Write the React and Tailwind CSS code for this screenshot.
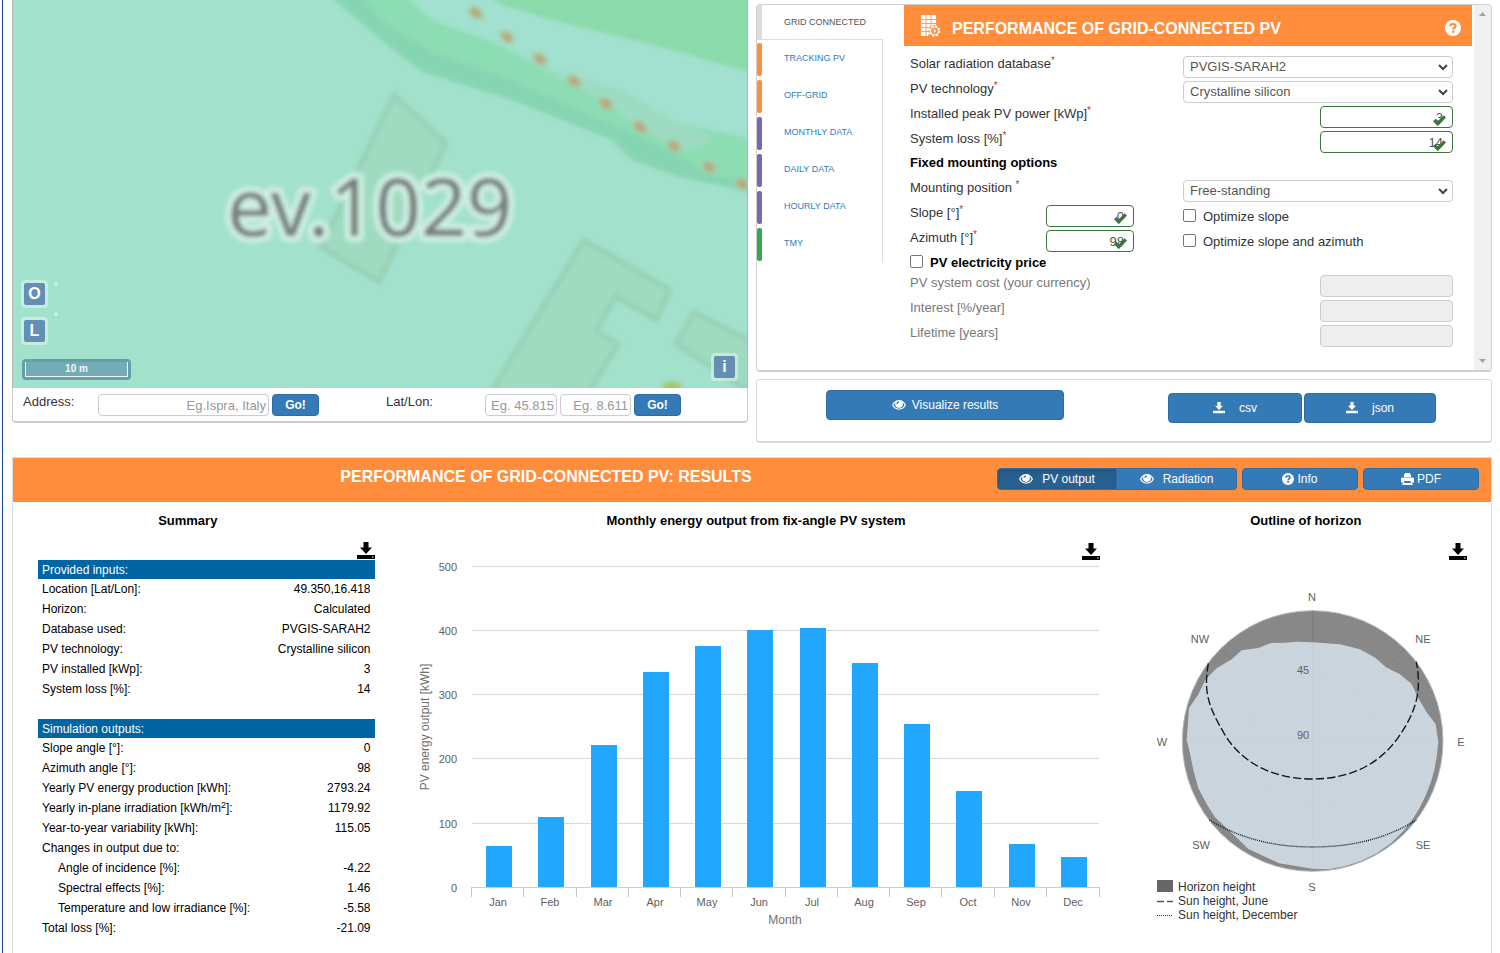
import { useState } from "react";

const tabs = [
  { name: "TRACKING PV", color: "bg-[#ff8d3c]" },
  { name: "OFF-GRID", color: "bg-[#ff8d3c]" },
  { name: "MONTHLY DATA", color: "bg-[#7a68ae]" },
  { name: "DAILY DATA", color: "bg-[#7a68ae]" },
  { name: "HOURLY DATA", color: "bg-[#7a68ae]" },
  { name: "TMY", color: "bg-[#34a853]" },
];

const inputs = [
  ["Location [Lat/Lon]:", "49.350,16.418"],
  ["Horizon:", "Calculated"],
  ["Database used:", "PVGIS-SARAH2"],
  ["PV technology:", "Crystalline silicon"],
  ["PV installed [kWp]:", "3"],
  ["System loss [%]:", "14"],
];

const outputs = [
  ["Slope angle [°]:", "0"],
  ["Azimuth angle [°]:", "98"],
  ["Yearly PV energy production [kWh]:", "2793.24"],
  [
    <>
      Yearly in-plane irradiation [kWh/m<sup className="text-[9px]">2</sup>]:
    </>,
    "1179.92",
  ],
  ["Year-to-year variability [kWh]:", "115.05"],
  ["Changes in output due to:", ""],
  ["Angle of incidence [%]:", "-4.22", true],
  ["Spectral effects [%]:", "1.46", true],
  ["Temperature and low irradiance [%]:", "-5.58", true],
  ["Total loss [%]:", "-21.09"],
];

const months = [
  { name: "Jan", value: 64 },
  { name: "Feb", value: 109 },
  { name: "Mar", value: 221 },
  { name: "Apr", value: 335 },
  { name: "May", value: 375 },
  { name: "Jun", value: 399 },
  { name: "Jul", value: 403 },
  { name: "Aug", value: 349 },
  { name: "Sep", value: 254 },
  { name: "Oct", value: 150 },
  { name: "Nov", value: 67 },
  { name: "Dec", value: 47 },
];

const EyeIcon = () => (
  <svg width="14" height="10" viewBox="0 0 14 10" aria-hidden="true">
    <path
      fill="currentColor"
      fillRule="evenodd"
      d="M7 0C3.8 0 1.3 2 0 5c1.3 2.800 3.800 4.700 7 4.700S12.700 7.800 14 5C12.700 2 10.200 0 7 0ZM1.400 5.100C2 3.800 2.800 2.800 3.700 2.200 3.300 2.900 3.100 3.500 3.100 4.300c0 2.200 1.700 3.600 3.900 3.600s3.900-1.400 3.900-3.600c0-.8-.2-1.400-.6-2.100.9.6 1.700 1.600 2.300 2.900C11.500 7.300 9.500 8.700 7 8.700S2.500 7.300 1.400 5.100Z"
    />
    <path d="M4.900 4C5 2.800 5.800 2 7 1.900" fill="none" stroke="#2d6ca3" strokeWidth="1.1" />
  </svg>
);

const SaveIcon = ({ size = 18 }) => (
  <svg width={size} height={size} viewBox="0 0 18 18" fill="currentColor" aria-hidden="true">
    <path d="M6.500 0h5v5.500H15L9 12 3 5.500h3.500Z" />
    <path fillRule="evenodd" d="M0 13h18v4H0Zm15 1.500v1h1.500v-1Z" />
  </svg>
);

const QuestionIcon = ({ size, mark = "#337ab7" }) => (
  <svg width={size} height={size} viewBox="0 0 16 16" aria-hidden="true">
    <circle cx="8" cy="8" r="8" fill="#fff" />
    <path
      d="M5.300 6.200C5.300 4.500 6.500 4 8 4s2.600.8 2.600 2.200c0 1.700-2.400 1.400-2.400 3.300"
      fill="none"
      stroke={mark}
      strokeWidth="2.200"
    />
    <path d="M7 10.600h2.400v2.200H7Z" fill={mark} />
  </svg>
);

const PrintIcon = () => (
  <svg width="13" height="12" viewBox="0 0 13 12" fill="currentColor" aria-hidden="true">
    <path d="M4 0h5v1l1 1v2H3V1h1Z" />
    <path fillRule="evenodd" d="M1 4.500h11l1 1v4h-2l1 2.500H1l1-2.500H0v-4Zm2.500 3.500L3 10h7L9.500 8Z" />
  </svg>
);

const PanelIcon = () => (
  <svg width="22" height="24" viewBox="0 0 22 24" aria-hidden="true">
    <path d="M1 1h15v11h-4l-4 10H1Z" fill="#fff" />
    <path
      d="M6 0v22M11 0v14M0 5.500h17M0 9.500h17M0 13.500h10M0 17.500h10"
      stroke="#ffa05c"
      strokeWidth="1"
    />
    <circle cx="14.500" cy="17" r="6" fill="#ff8d3c" />
    <circle cx="14.500" cy="17" r="5" fill="none" stroke="#fff" strokeWidth="1.600" strokeDasharray="2 1.927" />
    <circle cx="14.500" cy="17" r="4" fill="none" stroke="#fff" strokeWidth="1.200" />
    <path d="m15.500 14-2.500 3.500h1.500l-.8 2.500 2.600-3.500h-1.600Z" fill="#fff" />
  </svg>
);

const mapDots = [
  [463, 13],
  [494, 37],
  [527, 59],
  [561, 81],
  [593, 104],
  [627, 127],
  [661, 146],
  [696, 167],
  [729, 184],
];

const MapButton = ({ children, className }) => (
  <div className={`absolute rounded bg-white/40 p-[3px] ${className}`}>
    <button
      type="button"
      className="flex h-[22px] w-[21px] items-center justify-center rounded-xs bg-[#628fb3] text-base font-bold text-white"
    >
      {children}
    </button>
  </div>
);

const MapView = () => (
  <div className="relative h-[388px] overflow-hidden border-x border-[#b5b5b5] bg-[#a2e1cb]">
    <svg
      className="h-full w-full"
      viewBox="0 0 734 388"
      preserveAspectRatio="xMinYMin slice"
      role="img"
      aria-label="Map"
    >
      <defs>
        <filter id="soft" x="-5%" y="-5%" width="110%" height="110%">
          <feGaussianBlur stdDeviation="2.200" />
        </filter>
      </defs>
      <g filter="url(#soft)">
        <path d="M309-10 383 52 410 72 499 100 599 140 619 160 666 177 750 195V-10Z" fill="#86d5b2" />
        <path d="M346-10 366 18 416 50 499 80 566 110 619 133 666 155 690 172 750 186V-10Z" fill="#8cddb3" />
        <path d="M385-10 419 20 483 43 543 77 600 106 625 128 670 150 690 145 700 138 666 123 750 142V-10Z" fill="#9ddcc2" />
        <path d="M385-10 419 20 483 43 543 70 610 90 666 123 750 140V-10Z" fill="#a2e1cf" />
        <path d="M468-10 489 5 549 23 633 43 750 76V-10Z" fill="#8bdaab" />
        <g fill="#9fdbc0" stroke="#97d0b5" strokeWidth="5">
          <path d="M381 95 433 143 386 240 366 282 308 247Z" />
          <path d="M571 240 657 290 643 320 603 296 583 331 605 344 576 392 476 395Z" />
          <path d="M681 312 750 348V400L663 344Z" />
        </g>
        {mapDots.map(([x, y]) => (
          <g key={x}>
            <ellipse cx={x} cy={y} rx="9" ry="6" fill="#a6caa6" transform={`rotate(38 ${x} ${y})`} />
            <ellipse cx={x} cy={y} rx="6" ry="4" fill="#b8a87c" transform={`rotate(38 ${x} ${y})`} />
          </g>
        ))}
        <ellipse cx="659" cy="387" rx="10" ry="5" fill="#a3c66c" />
        <text
          x="214"
          y="236"
          fontSize="80"
          fontFamily="Noto Sans, sans-serif"
          fill="#767d7a"
          stroke="#cdeee2"
          strokeWidth="12"
          strokeLinejoin="round"
          paintOrder="stroke"
        >
          ev.1029
        </text>
      </g>
    </svg>
    <MapButton className="left-[8px] top-[280px]">O</MapButton>
    <MapButton className="left-[8px] top-[317px]">L</MapButton>
    <MapButton className="right-[9px] top-[353px]">i</MapButton>
    <span className="absolute left-[41px] top-[282px] size-1 rounded-full bg-white/40" />
    <span className="absolute left-[41px] top-[312px] size-1 rounded-full bg-white/40" />
    <div className="absolute left-[9px] top-[359px] rounded bg-[#659fa9] p-[3px]">
      <div className="h-[15px] w-[103px] border border-t-0 border-white/90 bg-[#72adb5] text-center text-[10px] leading-[14px] font-bold text-white/90">
        10 m
      </div>
    </div>
  </div>
);

const smallInput =
  "h-[22px] rounded-sm border border-[#ccc] px-[2px] text-right text-[13px] placeholder:text-[#999]";
const goButton =
  "h-[22px] w-[47px] rounded-sm border border-[#2e6da4] bg-[#337ab7] text-xs font-bold text-white";

const AddressBar = () => (
  <div className="flex h-[35px] items-start rounded-b-sm border-x border-b-2 border-[#ccc] pt-[6px] pl-[10px]">
    <label htmlFor="address" className="w-[75px] leading-4">
      Address:
    </label>
    <input id="address" className={`${smallInput} mr-[3px] w-[171px]`} placeholder="Eg.Ispra, Italy" />
    <button type="button" className={goButton}>
      Go!
    </button>
    <label htmlFor="lat" className="ml-[67px] w-[99px] leading-4">
      Lat/Lon:
    </label>
    <input id="lat" className={`${smallInput} mr-[3px] w-[72px]`} placeholder="Eg. 45.815" />
    <input className={`${smallInput} mr-[3px] w-[71px]`} placeholder="Eg. 8.611" aria-label="Longitude" />
    <button type="button" className={goButton}>
      Go!
    </button>
  </div>
);

const Star = () => <sup className="-top-1 text-[10px] text-[#a94442]">*</sup>;

const FormRow = ({ id, label, required, muted, middle, children }) => (
  <div className="flex h-[25px] items-start">
    <label htmlFor={id} className={`flex-1 leading-[18px] ${muted ? "text-[#777]" : ""}`}>
      {label}
      {required && <Star />}
    </label>
    {middle}
    <div className="flex w-[270px] justify-end pt-px">{children}</div>
  </div>
);

const SelectBox = ({ id, value }) => (
  <div className="relative w-full">
    <select
      id={id}
      className="block h-[22px] w-full appearance-none rounded-sm border border-[#ccc] bg-white px-[6px] text-[13px] text-[#555]"
    >
      <option>{value}</option>
    </select>
    <svg className="pointer-events-none absolute top-[8px] right-[5px]" width="10" height="7" viewBox="0 0 10 7">
      <path d="m1 1 4 4 4-4" fill="none" stroke="#444" strokeWidth="2" />
    </svg>
  </div>
);

const ValidInput = ({ id, defaultValue, className }) => (
  <div className={`relative ${className}`}>
    <input
      id={id}
      defaultValue={defaultValue}
      className="block h-[22px] w-full rounded-sm border border-[#3c763d] bg-white pr-[9px] text-right text-[13px] text-[#555]"
    />
    <svg className="pointer-events-none absolute top-[8px] right-[7px]" width="13" height="12" viewBox="0 0 13 12">
      <path d="m1.200 6 3.600 3.700L11.800 2.300" fill="none" stroke="#3c763d" strokeWidth="3.400" />
    </svg>
  </div>
);

const checkbox = "size-[13px] shrink-0 appearance-none rounded-xs border border-[#767676] bg-white";

const OptionCheck = ({ id, label }) => (
  <div className="flex w-full items-start gap-[7px] pt-[4px]">
    <input type="checkbox" id={id} className={checkbox} />
    <label htmlFor={id} className="leading-4">
      {label}
    </label>
  </div>
);

const DisabledInput = ({ id }) => (
  <input id={id} disabled className="h-[22px] w-[133px] rounded-sm border border-[#ccc] bg-[#eee]" />
);

const ToolsPanel = () => (
  <div className="mt-1 flex h-[368px] rounded-sm border border-b-2 border-[#d0d0d0]">
    {/* TABS */}
    <ul className="w-[126px] text-[9px]">
      <li className="flex h-[35px] border-b border-[#ddd]">
        <span className="w-[5px] bg-[#ddd]" />
        <a href="#grid" className="flex flex-1 items-center pl-[22px] text-[#555]">
          GRID CONNECTED
        </a>
      </li>
      {tabs.map((tab) => (
        <li key={tab.name} className="flex h-[37px] border-r border-[#ddd] pt-[3px] pb-px">
          <span className={`w-[5px] rounded-xs ${tab.color}`} />
          <a href="#tab" className="flex flex-1 items-center pb-[3px] pl-[22px] text-[#337ab7]">
            {tab.name}
          </a>
        </li>
      ))}
    </ul>

    {/* FORM */}
    <form className="ml-[21px] flex-1">
      <div className="flex h-[41px] items-center bg-[#ff8d3c] pr-[11px] pl-[16px] text-white">
        <PanelIcon />
        <h2 className="ml-[10px] flex-1 pt-[6px] text-base leading-5 font-bold">PERFORMANCE OF GRID-CONNECTED PV</h2>
        <span className="pt-[5px]">
          <QuestionIcon size={16} mark="#ff8d3c" />
        </span>
      </div>
      <div className="pt-[9px] pr-[19px] pl-[6px]">
        <FormRow id="database" label="Solar radiation database" required>
          <SelectBox id="database" value="PVGIS-SARAH2" />
        </FormRow>
        <FormRow id="technology" label="PV technology" required>
          <SelectBox id="technology" value="Crystalline silicon" />
        </FormRow>
        <FormRow id="power" label="Installed peak PV power [kWp]" required>
          <ValidInput id="power" defaultValue="3" className="w-[133px]" />
        </FormRow>
        <FormRow id="loss" label="System loss [%]" required>
          <ValidInput id="loss" defaultValue="14" className="w-[133px]" />
        </FormRow>
        <h3 className="h-6 leading-[16px] font-bold text-black">Fixed mounting options</h3>
        <FormRow id="mounting" label="Mounting position " required>
          <SelectBox id="mounting" value="Free-standing" />
        </FormRow>
        <FormRow
          id="slope"
          label="Slope [°]"
          required
          middle={<ValidInput id="slope" defaultValue="0" className="mr-[49px] w-[88px] pt-px" />}
        >
          <OptionCheck id="opt-slope" label="Optimize slope" />
        </FormRow>
        <FormRow
          id="azimuth"
          label="Azimuth [°]"
          required
          middle={<ValidInput id="azimuth" defaultValue="98" className="mr-[49px] w-[88px] pt-px" />}
        >
          <OptionCheck id="opt-both" label="Optimize slope and azimuth" />
        </FormRow>
        <div className="flex h-5 items-start gap-[7px] font-bold text-black">
          <input type="checkbox" id="price" className={`${checkbox} mt-px`} />
          <label htmlFor="price" className="leading-[18px]">
            PV electricity price
          </label>
        </div>
        <FormRow id="cost" label="PV system cost (your currency)" muted>
          <DisabledInput id="cost" />
        </FormRow>
        <FormRow id="interest" label="Interest [%/year]" muted>
          <DisabledInput id="interest" />
        </FormRow>
        <FormRow id="lifetime" label="Lifetime [years]" muted>
          <DisabledInput id="lifetime" />
        </FormRow>
      </div>
    </form>

    {/* SCROLLBAR */}
    <div className="ml-[2px] flex w-[17px] flex-col items-center justify-between bg-[#f0f0f0] py-[7px] text-[#a3a3a3]">
      <svg width="7" height="4" viewBox="0 0 7 4" fill="currentColor">
        <path d="M0 4 3.500 0 7 4Z" />
      </svg>
      <svg width="7" height="4" viewBox="0 0 7 4" fill="currentColor">
        <path d="M0 0 3.500 4 7 0Z" />
      </svg>
    </div>
  </div>
);

const blueButton =
  "flex items-center justify-center rounded-sm border border-[#2e6da4] bg-[#337ab7] text-xs text-white";

const ActionsPanel = () => (
  <div className="mt-[7px] flex h-[64px] items-start justify-between rounded-sm border border-b-2 border-[#d8d8d8] pr-[55px] pl-[69px]">
    <button type="button" className={`${blueButton} mt-[10px] h-[30px] w-[238px] gap-[6px]`}>
      <EyeIcon />
      Visualize results
    </button>
    <div className="mt-[13px] flex gap-[2px]">
      <button type="button" className={`${blueButton} h-[30px] w-[134px] gap-[14px]`}>
        <SaveIcon size={12} />
        csv
      </button>
      <button type="button" className={`${blueButton} h-[30px] w-[132px] gap-[14px]`}>
        <SaveIcon size={12} />
        json
      </button>
    </div>
  </div>
);

const SummaryRow = ({ row: [label, value, indent] }) => (
  <tr className="h-5">
    <td className={`py-0 pr-1 whitespace-nowrap ${indent ? "pl-5" : "pl-1"}`}>{label}</td>
    <td className="px-1 py-0 text-right">{value}</td>
  </tr>
);

const SummaryTable = () => (
  <table className="w-full border-collapse text-xs leading-4 text-black">
    <tbody>
      <tr className="h-[19px] bg-[#0065a2] text-white">
        <th colSpan={2} className="px-1 py-0 text-left font-normal">
          Provided inputs:
        </th>
      </tr>
      {inputs.map((row, index) => (
        <SummaryRow key={index} row={row} />
      ))}
      <tr className="h-5">
        <td colSpan={2} />
      </tr>
      <tr className="h-[19px] bg-[#0065a2] text-white">
        <th colSpan={2} className="px-1 py-0 text-left font-normal">
          Simulation outputs:
        </th>
      </tr>
      {outputs.map((row, index) => (
        <SummaryRow key={index} row={row} />
      ))}
    </tbody>
  </table>
);

const MonthlyChart = () => {
  const left = 57;
  const base = 326;
  const step = 627 / 12;
  const scale = 0.643;

  return (
    <svg width="690" height="375" viewBox="0 0 690 375" fontSize="11" fill="#606060">
      {[0, 100, 200, 300, 400, 500].map((tick) => {
        const y = Math.round(base - tick * scale) + 0.5;
        return (
          <g key={tick}>
            <path d={`M${left} ${y}H684`} stroke={tick ? "#d8d8d8" : "#c0d0e0"} />
            <text x="42" y={y + 4} textAnchor="end">
              {tick}
            </text>
          </g>
        );
      })}
      {months.map((month, index) => {
        const x = Math.round(left + index * step);
        const height = Math.round(month.value * scale);
        return (
          <g key={month.name}>
            <path d={`M${x - 0.5} ${base}v10`} stroke="#c8c8c8" />
            <rect x={x + 14} y={base - height} width="26" height={height} fill="#22a7ff" />
            <text x={x + 26} y="345" textAnchor="middle">
              {month.name}
            </text>
          </g>
        );
      })}
      <path d={`M684.5 ${base}v10`} stroke="#c8c8c8" />
      <text x="370" y="363" textAnchor="middle" fontSize="12" fill="#707070">
        Month
      </text>
      <text transform="rotate(-90 14 166)" x="14" y="166" textAnchor="middle" fontSize="12" fill="#707070">
        PV energy output [kWh]
      </text>
    </svg>
  );
};

const compass = [
  ["N", 172, 21],
  ["NE", 283, 63],
  ["E", 321, 166],
  ["SE", 283, 269],
  ["S", 172, 311],
  ["SW", 61, 269],
  ["W", 22, 166],
  ["NW", 60, 63],
];

const HorizonChart = () => (
  <svg width="350" height="345" viewBox="0 0 350 345" fontSize="11" fill="#606060">
    <g transform="scale(0.3333)">
      <circle cx="518" cy="483" r="391" fill="#888" stroke="#b0bac4" strokeWidth="3" />
      <path d="M518 92V190M245 210 275 238M790 210 738 262" stroke="#7c7c7c" strokeWidth="3" />
      <path
        fill="#c9d4dd"
        d="M517 187 600 193 660 208 706 233 738 262 780 283 815 312 835 355 862 400 887 432 895 485 891 525 883 570 873 605 858 645 840 682 820 715 791 752 755 788 710 820 665 842 615 859 565 868 517 866 417 850 325 807 285 768 225 712 200 672 175 625 160 570 150 520 140 480 147 385 175 343 197 298 230 265 275 238 305 211 355 204 392 189 435 188 470 185Z"
      />
      <path d="M518 190V866M140 483H895" stroke="#c5d0d9" strokeWidth="3" />
      <circle cx="518" cy="483" r="196" fill="none" stroke="#c6d1da" strokeWidth="3" />
      <path
        d="M205 250C190 340 205 380 258 470C310 550 400 597 517 597C635 597 720 550 775 472C832 390 845 330 829 245"
        fill="none"
        stroke="#111"
        strokeWidth="4"
        strokeDasharray="25 9"
      />
      <path
        d="M208 720C300 775 400 801 517 801C640 801 740 775 829 720"
        fill="none"
        stroke="#111"
        strokeWidth="4"
        strokeDasharray="3 3"
      />
    </g>
    {compass.map(([name, x, y]) => (
      <text key={name} x={x} y={y} textAnchor="middle">
        {name}
      </text>
    ))}
    <text x="163" y="94" textAnchor="middle">
      45
    </text>
    <text x="163" y="159" textAnchor="middle">
      90
    </text>
    <rect x="17" y="300" width="16" height="12" fill="#666" />
    <path d="M17 321.500h16" stroke="#555" strokeWidth="1.500" strokeDasharray="7 3" />
    <path d="M17 335.500h15" stroke="#333" strokeDasharray="1 1" />
    <g fontSize="12" fill="#333">
      <text x="38" y="311">
        Horizon height
      </text>
      <text x="38" y="325">
        Sun height, June
      </text>
      <text x="38" y="339">
        Sun height, December
      </text>
    </g>
  </svg>
);

const DownloadButton = ({ label }) => (
  <button type="button" aria-label={label} className="block text-black">
    <SaveIcon />
  </button>
);

const Results = () => {
  const [view, setView] = useState("pv");
  const active = "bg-[#286090] shadow-[inset_0_3px_5px_rgba(0,0,0,0.125)]";

  return (
    <section className="mt-[14px] flex-1 border border-b-0 border-[#ddd]">
      <header className="flex h-[44px] items-center bg-[#ff8d3c] pr-[12px]">
        <h2 className="flex-1 pb-[6px] pl-[82px] text-center text-base font-bold text-white">
          PERFORMANCE OF GRID-CONNECTED PV: RESULTS
        </h2>
        <div className="flex gap-[5px] pb-[3px]">
          <div className="flex">
            <button
              type="button"
              onClick={() => setView("pv")}
              className={`${blueButton} h-[22px] w-[120px] gap-[9px] rounded-r-none ${view === "pv" ? active : ""}`}
            >
              <EyeIcon />
              PV output
            </button>
            <button
              type="button"
              onClick={() => setView("radiation")}
              className={`${blueButton} h-[22px] w-[120px] gap-[9px] rounded-l-none border-l-0 ${view === "radiation" ? active : ""}`}
            >
              <EyeIcon />
              Radiation
            </button>
          </div>
          <button type="button" className={`${blueButton} h-[22px] w-[116px] gap-[3px]`}>
            <QuestionIcon size={12} />
            Info
          </button>
          <button type="button" className={`${blueButton} h-[22px] w-[116px] gap-[3px]`}>
            <PrintIcon />
            PDF
          </button>
        </div>
      </header>

      <div className="grid grid-cols-[1fr_2fr_1fr] pt-[10px]">
        {/* SUMMARY */}
        <div className="pr-[8px] pl-[25px]">
          <h3 className="pr-[37px] text-center leading-[18px] font-bold text-black">Summary</h3>
          <div className="flex h-[30px] items-end justify-end">
            <DownloadButton label="Download summary" />
          </div>
          <SummaryTable />
        </div>

        {/* MONTHLY OUTPUT */}
        <div className="pr-[17px]">
          <h3 className="pl-[25px] text-center leading-[18px] font-bold text-black">
            Monthly energy output from fix-angle PV system
          </h3>
          <div className="flex h-[31px] items-end justify-end pr-[5px]">
            <DownloadButton label="Download monthly output" />
          </div>
          <div className="flex justify-end">
            <MonthlyChart />
          </div>
        </div>

        {/* HORIZON */}
        <div className="pr-px">
          <h3 className="text-center leading-[18px] font-bold text-black">Outline of horizon</h3>
          <div className="flex h-[31px] items-end justify-end pr-[23px]">
            <DownloadButton label="Download horizon" />
          </div>
          <div className="flex justify-end pt-[19px]">
            <HorizonChart />
          </div>
        </div>
      </div>
    </section>
  );
};

const App = () => {
  return (
    <div className="ml-[2px] flex min-h-screen flex-col border-l border-[#1c4587] bg-white pr-2 pl-[9px] font-['Liberation_Sans',Arial,sans-serif] text-[13px] leading-[18px] text-[#333]">
      <div className="flex items-start gap-2">
        <div className="flex-1">
          <MapView />
          <AddressBar />
        </div>
        <div className="flex-1">
          <ToolsPanel />
          <ActionsPanel />
        </div>
      </div>
      <Results />
    </div>
  );
};

export default App;
